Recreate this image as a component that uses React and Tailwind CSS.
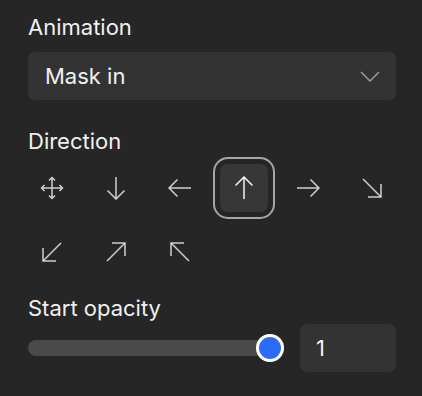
import React from "react";

const P = {
  move: "M12 1.5V22.5M1.5 12H22.5M9 4.5L12 1.5L15 4.5M9 19.5L12 22.5L15 19.5M4.5 9L1.5 12L4.5 15M19.5 9L22.5 12L19.5 15",
  down: "M12 1V23M3.5 14.5L12 23L20.5 14.5",
  left: "M1 12H23M9.5 3.5L1 12L9.5 20.5",
  up: "M12 1V23M3.5 9.5L12 1L20.5 9.5",
  right: "M1 12H23M14.5 3.5L23 12L14.5 20.5",
  dr: "M3 3L21 21M21 8V21H8",
  dl: "M21 3L3 21M3 8V21H16",
  ur: "M3 21L21 3M8 3H21V16",
  ul: "M21 21L3 3M16 3H3V16",
};

function Icon({ d, className }) {
  return (
    <svg width="24" height="24" viewBox="0 0 24 24" fill="none" className={className}>
      <path d={d} stroke="currentColor" strokeWidth="1.5" strokeLinecap="butt" strokeLinejoin="miter" />
    </svg>
  );
}

function Cell({ d, selected }) {
  return (
    <div
      className={
        "w-12 h-12 flex items-center justify-center rounded-[8px] " +
        (selected
          ? "bg-[#373737] outline-2 outline-offset-[5px] outline-[#a6a6a6] text-[#f2f2f2]"
          : "text-[#cfcfcf]")
      }
    >
      <Icon d={d} />
    </div>
  );
}

export default function App() {
  return (
    <div
      className="w-[422px] h-[396px] bg-[#262626] px-[28px] pt-[15px] text-[#f0f0f0]"
      style={{ fontFamily: "Inter, 'Noto Sans', sans-serif" }}
    >
      <div className="text-[22px] leading-[24px]">Animation</div>
      <div className="mt-[13px] h-12 w-[368px] rounded-[6px] bg-[#333333] flex items-center justify-between pl-[17px] pr-[16px]">
        <span className="text-[22px] leading-[24px]">Mask in</span>
        <svg width="20" height="11" viewBox="0 0 20 11" fill="none" className="text-[#9a9a9a]">
          <path d="M1 1L10 10L19 1" stroke="currentColor" strokeWidth="1.5" />
        </svg>
      </div>

      <div className="mt-[29px] text-[22px] leading-[24px]">Direction</div>
      <div className="mt-[11px] grid grid-cols-[repeat(6,48px)] gap-4">
        <Cell d={P.move} />
        <Cell d={P.down} />
        <Cell d={P.left} />
        <Cell d={P.up} selected />
        <Cell d={P.right} />
        <Cell d={P.dr} />
        <Cell d={P.dl} />
        <Cell d={P.ur} />
        <Cell d={P.ul} />
      </div>

      <div className="mt-[20px] text-[22px] leading-[24px]">Start opacity</div>
      <div className="mt-[4px] flex items-center gap-4 w-[368px]">
        <div className="relative w-[256px] h-12 flex items-center">
          <div className="w-full h-4 rounded-full bg-[#4a4a4a]" />
          <div className="absolute right-0 top-1/2 -translate-y-1/2 w-7 h-7 rounded-full bg-[#2a6cf6] border-[3px] border-white" />
        </div>
        <div className="w-24 h-12 rounded-[8px] bg-[#333333] flex items-center px-4 text-[22px]">1</div>
      </div>
    </div>
  );
}
